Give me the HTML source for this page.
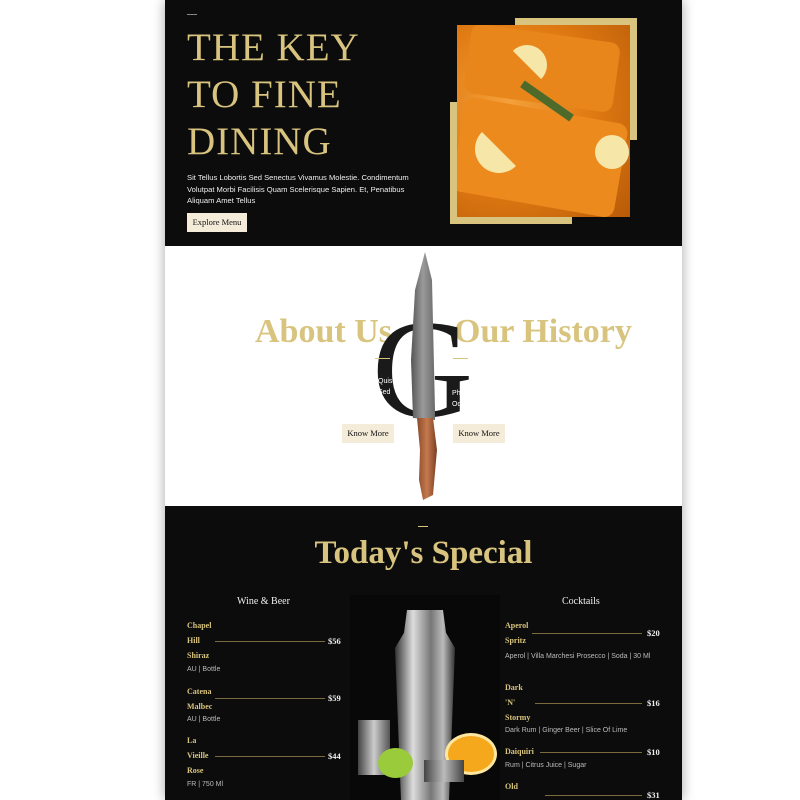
<!DOCTYPE html>
<html><head><meta charset="utf-8"><style>
*{margin:0;padding:0;box-sizing:border-box}
body{width:800px;height:800px;background:#fff;position:relative;overflow:hidden;font-family:"Liberation Sans",sans-serif}
.col{position:absolute;left:165px;top:0;width:517px;height:800px;box-shadow:0 0 12px rgba(0,0,0,.35)}
.a{position:absolute}
.serif{font-family:"Liberation Serif",serif}
.gold{color:#d8c47e}
.btn{position:absolute;background:#f4ecd9;color:#111;font-family:"Liberation Serif",serif;font-size:8.5px;text-align:center}
.item{position:absolute;font-family:"Liberation Serif",serif;font-weight:bold;color:#d8c47e;font-size:8px;line-height:15px}
.desc{position:absolute;color:#bbb;font-size:7px}
.line{position:absolute;height:1px;background:#7a6b3e}
.price{position:absolute;color:#eee;font-family:"Liberation Serif",serif;font-weight:bold;font-size:8.5px}
</style></head><body>
<div class="col">
 <div class="a" style="left:0;top:0;width:517px;height:246px;background:#0c0c0c"></div>
 <div class="a" style="left:0;top:246px;width:517px;height:260px;background:#fff"></div>
 <div class="a" style="left:0;top:506px;width:517px;height:294px;background:#0c0c0c"></div>
</div>
<!-- hero -->
<div class="a" style="left:187px;top:14px;width:10px;height:1px;background:#888"></div>
<div class="a serif gold" style="left:187px;top:24px;font-size:39px;line-height:47px;letter-spacing:1px">THE KEY<br>TO FINE<br>DINING</div>
<div class="a" style="left:187px;top:172px;width:232px;color:#eee;font-size:7.6px;line-height:11.5px">Sit Tellus Lobortis Sed Senectus Vivamus Molestie. Condimentum Volutpat Morbi Facilisis Quam Scelerisque Sapien. Et, Penatibus Aliquam Amet Tellus</div>
<div class="btn" style="left:187px;top:213px;width:60px;height:19px;line-height:19px">Explore Menu</div>
<div class="a" style="left:515px;top:18px;width:122px;height:122px;background:#d8c47e"></div>
<div class="a" style="left:450px;top:102px;width:122px;height:122px;background:#d8c47e"></div>
<div class="a" style="left:457px;top:25px;width:173px;height:192px;background:radial-gradient(circle at 30% 40%,#f4a03a,#e07a12 50%,#b85a08);overflow:hidden">
 <div class="a" style="left:10px;top:8px;width:150px;height:70px;background:#e8861c;border-radius:10px;transform:rotate(8deg)"></div>
 <div class="a" style="left:0;top:85px;width:165px;height:95px;background:#ec8a1e;border-radius:10px;transform:rotate(10deg)"></div>
 <div class="a" style="left:50px;top:20px;width:40px;height:40px;border-radius:50%;background:#f6e7a8;clip-path:polygon(0 0,100% 0,100% 100%)"></div>
 <div class="a" style="left:18px;top:100px;width:48px;height:48px;border-radius:50%;background:#f6e7a8;clip-path:polygon(0 0,0 100%,100% 100%)"></div>
 <div class="a" style="left:60px;top:72px;width:60px;height:8px;background:#4e6a2a;transform:rotate(35deg)"></div>
 <div class="a" style="left:138px;top:110px;width:34px;height:34px;border-radius:50%;background:#f6e7a8"></div>
</div>
<!-- about -->
<div class="a serif gold" style="left:255px;top:313px;font-size:34px;font-weight:bold">About Us</div>
<div class="a serif gold" style="left:454px;top:313px;font-size:34px;font-weight:bold">Our History</div>
<div class="a serif" style="left:372px;top:300px;font-size:140px;line-height:140px;color:#1a1a1a">G</div>
<div class="a" style="left:375px;top:358px;width:15px;height:1px;background:#d8c47e"></div>
<div class="a" style="left:453px;top:358px;width:15px;height:1px;background:#d8c47e"></div>
<div class="a" style="left:378px;top:376px;color:#fff;font-size:7px;line-height:11px">Quis<br>Sed</div>
<div class="a" style="left:452px;top:388px;color:#fff;font-size:7px;line-height:11px">Ph<br>Od</div>
<svg class="a" style="left:405px;top:250px" width="40" height="252" viewBox="0 0 40 252">
 <defs><linearGradient id="bl" x1="0" x2="1"><stop offset="0" stop-color="#555"/><stop offset=".5" stop-color="#9a9a9a"/><stop offset="1" stop-color="#6a6a6a"/></linearGradient>
 <linearGradient id="hd" x1="0" x2="1"><stop offset="0" stop-color="#8a4a2a"/><stop offset=".5" stop-color="#c57a4e"/><stop offset="1" stop-color="#7a3e22"/></linearGradient></defs>
 <path d="M20 2 L27 30 L30 160 L30 170 L8 168 L6 110 L10 40 Z" fill="url(#bl)"/>
 <path d="M12 168 L28 168 L32 200 L28 245 L18 250 L14 230 L15 200 Z" fill="url(#hd)"/>
</svg>
<div class="btn" style="left:342px;top:424px;width:52px;height:19px;line-height:19px">Know More</div>
<div class="btn" style="left:453px;top:424px;width:52px;height:19px;line-height:19px">Know More</div>
<!-- special -->
<div class="a" style="left:418px;top:526px;width:10px;height:1px;background:#d8c47e"></div>
<div class="a serif gold" style="left:0;width:847px;text-align:center;top:535px;font-size:33px;font-weight:bold">Today's Special</div>
<div class="a serif" style="left:237px;top:596px;color:#eee;font-size:10px">Wine &amp; Beer</div>
<div class="a serif" style="left:562px;top:596px;color:#eee;font-size:10px">Cocktails</div>
<div class="a" style="left:350px;top:595px;width:150px;height:205px;background:#080808"></div>
<div class="a" style="left:395px;top:610px;width:60px;height:190px;background:linear-gradient(90deg,#333,#ddd 30%,#777 60%,#bbb 80%,#333);clip-path:polygon(20% 0,80% 0,85% 12%,100% 20%,90% 100%,10% 100%,0 20%,15% 12%)"></div>
<div class="a" style="left:358px;top:720px;width:32px;height:55px;background:linear-gradient(90deg,#444,#ccc,#555)"></div>
<div class="a" style="left:445px;top:733px;width:52px;height:42px;border-radius:50%;background:#f5a81c;border:3px solid #fde7a0"></div>
<div class="a" style="left:378px;top:748px;width:35px;height:30px;border-radius:50%;background:#9acb3a"></div>
<div class="a" style="left:424px;top:760px;width:40px;height:22px;background:linear-gradient(90deg,#444,#bbb,#444)"></div>
<!-- left list -->
<div class="item" style="left:187px;top:618px">Chapel<br>Hill<br>Shiraz</div>
<div class="line" style="left:215px;top:641px;width:110px"></div><div class="price" style="left:328px;top:636px">$56</div>
<div class="desc" style="left:187px;top:666px">AU | Bottle</div>
<div class="item" style="left:187px;top:684px">Catena<br>Malbec</div>
<div class="line" style="left:215px;top:698px;width:110px"></div><div class="price" style="left:328px;top:693px">$59</div>
<div class="desc" style="left:187px;top:716px">AU | Bottle</div>
<div class="item" style="left:187px;top:733px">La<br>Vieille<br>Rose</div>
<div class="line" style="left:215px;top:756px;width:110px"></div><div class="price" style="left:328px;top:751px">$44</div>
<div class="desc" style="left:187px;top:781px">FR | 750 Ml</div>
<!-- right list -->
<div class="item" style="left:505px;top:618px">Aperol<br>Spritz</div>
<div class="line" style="left:532px;top:633px;width:110px"></div><div class="price" style="left:647px;top:628px">$20</div>
<div class="desc" style="left:505px;top:651px;width:160px;line-height:11px">Aperol | Villa Marchesi Prosecco | Soda | 30 Ml</div>
<div class="item" style="left:505px;top:680px">Dark<br>'N'<br>Stormy</div>
<div class="line" style="left:535px;top:703px;width:107px"></div><div class="price" style="left:647px;top:698px">$16</div>
<div class="desc" style="left:505px;top:727px">Dark Rum | Ginger Beer | Slice Of Lime</div>
<div class="item" style="left:505px;top:744px">Daiquiri</div>
<div class="line" style="left:540px;top:752px;width:102px"></div><div class="price" style="left:647px;top:747px">$10</div>
<div class="desc" style="left:505px;top:762px">Rum | Citrus Juice | Sugar</div>
<div class="item" style="left:505px;top:779px">Old</div>
<div class="line" style="left:545px;top:795px;width:97px"></div><div class="price" style="left:647px;top:790px">$31</div>
</body></html>
